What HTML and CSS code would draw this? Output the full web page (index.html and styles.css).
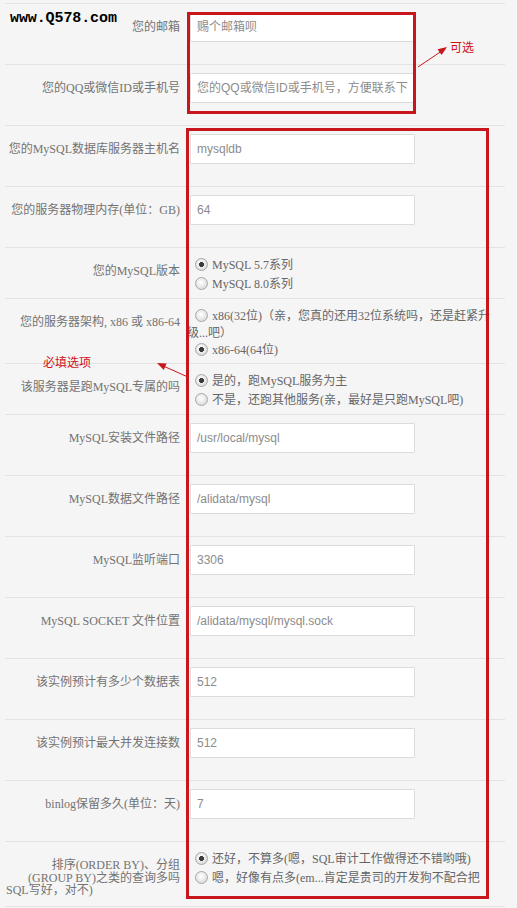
FILE: index.html
```html
<!DOCTYPE html>
<html lang="zh-CN">
<head>
<meta charset="utf-8">
<title>MySQL 配置生成</title>
<link rel="stylesheet" href="styles.css">
</head>
<body>
<div class="page">
  <form class="form">
    <div class="row">
      <label class="lbl">您的邮箱</label>
      <div class="ctl"><input class="txt" type="text" placeholder="赐个邮箱呗"></div>
    </div>
    <div class="row">
      <label class="lbl">您的QQ或微信ID或手机号</label>
      <div class="ctl"><input class="txt" type="text" placeholder="您的QQ或微信ID或手机号，方便联系下"></div>
    </div>
    <div class="row">
      <label class="lbl">您的MySQL数据库服务器主机名</label>
      <div class="ctl"><input class="txt" type="text" value="mysqldb"></div>
    </div>
    <div class="row">
      <label class="lbl">您的服务器物理内存(单位：GB)</label>
      <div class="ctl"><input class="txt" type="text" value="64"></div>
    </div>
    <div class="row">
      <label class="lbl">您的MySQL版本</label>
      <div class="ctl radios">
        <div class="opt"><input type="radio" name="ver" checked>MySQL 5.7系列</div>
        <div class="opt"><input type="radio" name="ver">MySQL 8.0系列</div>
      </div>
    </div>
    <div class="row">
      <label class="lbl">您的服务器架构, x86 或 x86-64</label>
      <div class="ctl radios arch">
        <div class="opt"><input type="radio" name="arch">x86(32位)（亲，您真的还用32位系统吗，还是赶紧升</div>
        <div class="cont">级...吧）</div>
        <div class="opt"><input type="radio" name="arch" checked>x86-64(64位)</div>
      </div>
    </div>
    <div class="row">
      <label class="lbl">该服务器是跑MySQL专属的吗</label>
      <div class="ctl radios">
        <div class="opt"><input type="radio" name="ded" checked>是的，跑MySQL服务为主</div>
        <div class="opt"><input type="radio" name="ded">不是，还跑其他服务(亲，最好是只跑MySQL吧)</div>
      </div>
    </div>
    <div class="row">
      <label class="lbl">MySQL安装文件路径</label>
      <div class="ctl"><input class="txt" type="text" value="/usr/local/mysql"></div>
    </div>
    <div class="row">
      <label class="lbl">MySQL数据文件路径</label>
      <div class="ctl"><input class="txt" type="text" value="/alidata/mysql"></div>
    </div>
    <div class="row">
      <label class="lbl">MySQL监听端口</label>
      <div class="ctl"><input class="txt" type="text" value="3306"></div>
    </div>
    <div class="row">
      <label class="lbl">MySQL SOCKET 文件位置</label>
      <div class="ctl"><input class="txt" type="text" value="/alidata/mysql/mysql.sock"></div>
    </div>
    <div class="row">
      <label class="lbl">该实例预计有多少个数据表</label>
      <div class="ctl"><input class="txt" type="text" value="512"></div>
    </div>
    <div class="row">
      <label class="lbl">该实例预计最大并发连接数</label>
      <div class="ctl"><input class="txt" type="text" value="512"></div>
    </div>
    <div class="row">
      <label class="lbl">binlog保留多久(单位：天)</label>
      <div class="ctl"><input class="txt" type="text" value="7"></div>
    </div>
    <div class="row last">
      <label class="lbl multi"><span class="ln">排序(ORDER BY)、分组</span><span class="ln">(GROUP BY)之类的查询多吗</span><span class="ln left">SQL写好，对不)</span></label>
      <div class="ctl radios">
        <div class="opt"><input type="radio" name="sql" checked>还好，不算多(嗯，SQL审计工作做得还不错哟哦)</div>
        <div class="opt"><input type="radio" name="sql">嗯，好像有点多(em...肯定是贵司的开发狗不配合把</div>
      </div>
    </div>
  </form>

  <div class="watermark">www.Q578.com</div>
  <div class="box box-opt"></div>
  <div class="box box-req"></div>
  <span class="note note-opt">可选</span>
  <span class="note note-req">必填选项</span>
  <svg class="arrows" width="517" height="908" viewBox="0 0 517 908" aria-hidden="true">
    <line x1="418" y1="67" x2="441" y2="51.5" stroke="#c8161d" stroke-width="1"/>
    <polygon points="447,47 441.6,55 437.6,49.2" fill="#c8161d"/>
    <line x1="189" y1="377.5" x2="164" y2="366.3" stroke="#c8161d" stroke-width="1"/>
    <polygon points="157,363 166.6,363.5 163.8,369.9" fill="#c8161d"/>
  </svg>
</div>
</body>
</html>
```

FILE: styles.css
```css
html, body {
  margin: 0;
  padding: 0;
  background: #f5f5f5;
}

.page {
  position: relative;
  width: 517px;
  height: 908px;
  overflow: hidden;
  padding: 3px 0 0 5px;
  box-sizing: border-box;
  font-family: "Liberation Serif", "Noto Sans CJK SC", serif;
  font-size: 12px;
  color: #6b6b6b;
}

.form {
  width: 500px;
  margin: 0;
  border-top: 1px solid #e3e3e3;
}

.row {
  display: grid;
  grid-template-columns: 175px 1fr;
  column-gap: 7px;
  border-bottom: 1px solid #e3e3e3;
}

.lbl {
  padding-top: 17px;
  line-height: 12px;
  text-align: right;
  white-space: nowrap;
  color: #737373;
}

.lbl.multi {
  padding-top: 17px;
  padding-bottom: 9px;
  line-height: 12.5px;
}

.lbl .ln {
  display: block;
}

.lbl .ln.left {
  text-align: left;
  margin-left: 1px;
}

.ctl {
  padding: 8px 0 22px;
}

.txt {
  display: block;
  box-sizing: border-box;
  width: 225px;
  height: 30px;
  margin: 0 0 0 3px;
  padding: 0 6px;
  border: 1px solid #dcdcdc;
  border-radius: 1px;
  background: #fff;
  font-family: "Liberation Sans", "Noto Sans CJK SC", sans-serif;
  font-size: 12px;
  color: #8c8c8c;
  outline: none;
}

.txt::placeholder {
  color: #8c8c8c;
  opacity: 1;
}

.radios {
  padding: 8px 0 4px;
}

.radios.arch {
  padding-bottom: 3px;
}

.opt {
  height: 19px;
  line-height: 19px;
  white-space: nowrap;
  color: #666;
}

.cont {
  line-height: 15px;
  height: 15px;
  white-space: nowrap;
  color: #666;
}

.opt input[type="radio"] {
  -webkit-appearance: none;
  appearance: none;
  box-sizing: border-box;
  width: 13px;
  height: 13px;
  margin: 0 4px 0 8px;
  vertical-align: -2px;
  border: 1px solid #a7a7a7;
  border-radius: 50%;
  background: radial-gradient(circle at 45% 40%, #ffffff 0, #f0f0f0 35%, #cfcfcf 100%);
}

.opt input[type="radio"]:checked {
  background:
    radial-gradient(circle at 50% 50%, #3a3a3a 0, #3a3a3a 2.2px, transparent 2.8px),
    radial-gradient(circle at 45% 40%, #ffffff 0, #f0f0f0 35%, #cfcfcf 100%);
}

.watermark {
  position: absolute;
  left: 10px;
  top: 11px;
  font-family: "Liberation Mono", "DejaVu Sans Mono", monospace;
  font-weight: bold;
  font-size: 15px;
  line-height: 15px;
  color: #000;
  letter-spacing: -0.1px;
}

.box {
  position: absolute;
  box-sizing: border-box;
  border: 3px solid #c8161d;
}

.box-opt {
  left: 187px;
  top: 12px;
  width: 229px;
  height: 102px;
}

.box-req {
  left: 186px;
  top: 128px;
  width: 303px;
  height: 771px;
}

.note {
  position: absolute;
  font-family: "Noto Sans CJK SC", sans-serif;
  font-size: 12px;
  line-height: 12px;
  color: #d0101a;
}

.note-opt {
  left: 450px;
  top: 41px;
}

.note-req {
  left: 43px;
  top: 356px;
}

.arrows {
  position: absolute;
  left: 0;
  top: 0;
  pointer-events: none;
}
```
